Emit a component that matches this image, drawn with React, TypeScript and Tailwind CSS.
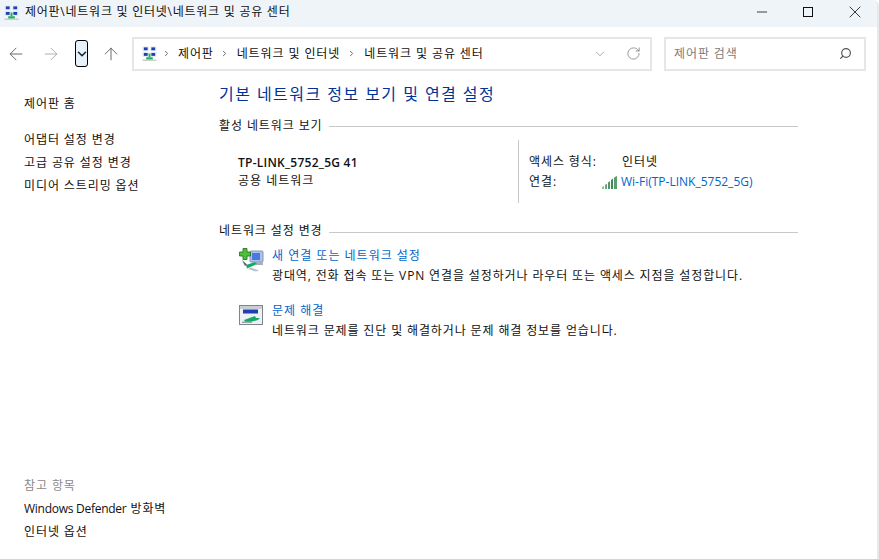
import { ArrowLeft, ArrowRight, ArrowUp, ChevronDown, ChevronRight, RotateCw, Search, Minus, X } from 'lucide-react'

function NetIcon({ size = 16 }: { size?: number }) {
  return (
    <svg width={size} height={size} viewBox="0 0 16 16" className="shrink-0">
      <rect x="0.5" y="0.5" width="6.5" height="5" fill="#dfe8f2" />
      <rect x="9" y="0.5" width="6.5" height="5" fill="#dfe8f2" />
      <rect x="0.5" y="6.5" width="6.5" height="5" fill="#dfe8f2" />
      <rect x="9" y="6.5" width="6.5" height="5" fill="#dfe8f2" />
      <rect x="2" y="1.5" width="4" height="3" fill="#1d3fb0" />
      <rect x="10" y="1.5" width="4" height="3" fill="#1d3fb0" />
      <rect x="2" y="7.5" width="4" height="3" fill="#1d3fb0" />
      <rect x="10" y="7.5" width="4" height="3" fill="#1d3fb0" />
      <rect x="7" y="8" width="2" height="4" fill="#1fb25a" />
      <rect x="4.5" y="12" width="7" height="2.5" fill="#1fb25a" />
      <rect x="0.5" y="14.5" width="15" height="1.2" fill="#b7c3c0" />
    </svg>
  )
}

function SignalIcon() {
  return (
    <svg width="16" height="13" viewBox="0 0 16 13" className="shrink-0">
      <path d="M0 13v-2l2-1v3z" fill="#8fbc9c" />
      <path d="M3 13V9l2-1.5V13z" fill="#6ba67e" />
      <path d="M6 13V6.5L8 5v8z" fill="#4f9767" />
      <path d="M9 13V4l2-1.5V13z" fill="#3f8a58" />
      <path d="M12 13V1.5L15 0v13z" fill="#5a9e70" />
    </svg>
  )
}

function NewConnectionIcon() {
  return (
    <svg width="25" height="25" viewBox="0 0 25 25" className="shrink-0">
      <rect x="11" y="3" width="13" height="11" rx="1" fill="#a9c2ee" stroke="#8a97b0" />
      <rect x="13" y="5" width="8" height="7" fill="#4a78de" />
      <rect x="17" y="14" width="7" height="3" fill="#a8b0bc" />
      <path d="M4 0.5h4v3.5h3.5v4H8v3.5H4V8H0.5V4H4z" fill="#4fbf3a" stroke="#1d6d1d" strokeWidth="0.8" />
      <path d="M7 17l9-3 2 2-10 4.5z" fill="#16a866" />
      <path d="M3 12l5 4.5-2 1.5z" fill="#55606c" />
      <path d="M9 21l8 2.5 3-1-8-3z" fill="#b8c0ca" />
    </svg>
  )
}

function TroubleshootIcon() {
  return (
    <svg width="24" height="20" viewBox="0 0 24 20" className="shrink-0">
      <rect x="0.5" y="0.5" width="23" height="19" fill="#eef1f3" stroke="#7d8590" />
      <rect x="1" y="1" width="22" height="3" fill="#c8ced4" />
      <rect x="4" y="4.5" width="15" height="4" fill="#1f3fb0" />
      <path d="M5 15l11-4 1 2h4l-2 2-12 3z" fill="#16a866" />
      <rect x="3" y="16.5" width="10" height="1.5" fill="#9aa3ad" />
    </svg>
  )
}

function SideLink({ children }: { children: React.ReactNode }) {
  return <a className="block text-[12px] leading-[23px] text-[#111] tracking-[0.9px]">{children}</a>
}

function Legend({ label, lineTop }: { label: string; lineTop: string }) {
  return (
    <div className="flex items-center gap-[6px]">
      <span className="text-[12px] leading-[16px] tracking-[0.9px] text-[#111]">{label}</span>
      <div className={`flex-1 h-px bg-[#c8c8c8] ${lineTop}`} />
    </div>
  )
}

function TaskRow({ icon, title, desc, iconTop }: { icon: React.ReactNode; title: string; desc: string; iconTop: string }) {
  return (
    <div className="flex">
      <div className={`w-[34px] flex justify-center shrink-0 ${iconTop}`}>{icon}</div>
      <div className="ml-[4px]">
        <div className="text-[12px] leading-[20px] tracking-[1px] text-[#0066cc]">{title}</div>
        <div className="text-[12px] leading-[20px] tracking-[0.87px] text-[#111]">{desc}</div>
      </div>
    </div>
  )
}

export default function App() {
  return (
    <div
      className="w-[879px] h-[559px] flex flex-col bg-white overflow-hidden border-r-2 border-[#e8e8e8] rounded-tr-[6px]"
      style={{ fontFamily: '"Open Sans", "Noto Sans CJK KR", sans-serif' }}
    >
      <header className="h-[27px] shrink-0 bg-[#eff4f9] flex items-center pl-[4px] pb-[3px]">
        <NetIcon size={15} />
        <span className="ml-[6px] text-[12px] tracking-[0.75px] text-[#111]">제어판\네트워크 및 인터넷\네트워크 및 공유 센터</span>
        <div className="ml-auto flex items-center text-[#111]">
          <div className="w-[44px] flex justify-center"><Minus size={16} strokeWidth={1.2} /></div>
          <div className="w-[47px] flex justify-center"><div className="w-[10px] h-[10px] border border-[#111]" /></div>
          <div className="w-[46px] flex justify-center pl-[1px]"><X size={20} strokeWidth={1} /></div>
        </div>
      </header>

      <div className="h-[53px] shrink-0 flex items-center">
        <div className="w-[132px] flex items-center shrink-0">
          <div className="w-[32px] flex justify-center text-[#5f5f5f]"><ArrowLeft size={20} strokeWidth={1.1} /></div>
          <div className="w-[38px] flex justify-center text-[#a8a8a8]"><ArrowRight size={20} strokeWidth={1.1} /></div>
          <div className="ml-[5px] w-[13px] h-[27px] rounded-[3px] border border-black bg-[#e5f1fb] flex items-center justify-center">
            <ChevronDown size={14} strokeWidth={2.6} className="shrink-0 text-[#222]" />
          </div>
          <div className="w-[44px] pl-[1px] flex justify-center text-[#5f5f5f]"><ArrowUp size={20} strokeWidth={1.1} /></div>
        </div>
        <div className="w-[520px] h-[34px] border-2 border-[#e6e6e6] flex items-center pl-[8px] shrink-0">
          <NetIcon size={15} />
          <ChevronRight size={9} strokeWidth={2.6} className="ml-[5px] text-[#666]" />
          <span className="ml-[7px] text-[12px] tracking-[0.85px] text-[#111]">제어판</span>
          <ChevronRight size={9} strokeWidth={2.6} className="ml-[6px] text-[#666]" />
          <span className="ml-[8px] text-[12px] tracking-[0.9px] text-[#111]">네트워크 및 인터넷</span>
          <ChevronRight size={9} strokeWidth={2.6} className="ml-[7px] text-[#666]" />
          <span className="ml-[8px] text-[12px] tracking-[0.9px] text-[#111]">네트워크 및 공유 센터</span>
          <div className="ml-auto flex items-center text-[#777]">
            <ChevronDown size={14} strokeWidth={1.1} />
            <RotateCw size={15} strokeWidth={1.2} className="ml-[19px] mr-[9px]" />
          </div>
        </div>
        <div className="ml-[12px] w-[202px] h-[34px] border-2 border-[#e6e6e6] flex items-center pl-[8px] pr-[6px] shrink-0">
          <span className="text-[12px] tracking-[0.9px] text-[#7a7a7a]">제어판 검색</span>
          <Search size={13} strokeWidth={2.2} className="ml-auto mr-[6px] text-[#555] -scale-x-100" />
        </div>
      </div>

      <div className="flex-1 flex min-h-0">
        <aside className="w-[219px] shrink-0 pl-[24px] flex flex-col pt-[12px] pb-[16px]">
          <SideLink>제어판 홈</SideLink>
          <div className="mt-[13px]">
            <SideLink>어댑터 설정 변경</SideLink>
            <SideLink>고급 공유 설정 변경</SideLink>
            <SideLink>미디어 스트리밍 옵션</SideLink>
          </div>
          <div className="mt-auto">
            <div className="text-[12px] leading-[23px] tracking-[0.9px] text-[#8a8a8a]">참고 항목</div>
            <SideLink><span className="tracking-[-0.27px]">Windows Defender</span> 방화벽</SideLink>
            <SideLink>인터넷 옵션</SideLink>
          </div>
        </aside>

        <main className="w-[579px] shrink-0 pt-[2px]">
          <h1 className="text-[16px] leading-[24px] tracking-[1.45px] text-[#003399]">기본 네트워크 정보 보기 및 연결 설정</h1>
          <div className="mt-[12px]"><Legend label="활성 네트워크 보기" lineTop="mt-[1px]" /></div>
          <div className="flex h-[63px] mt-[6px]">
            <div className="w-[300px] border-r border-[#c8c8c8] pl-[19px] pt-[14px] shrink-0">
              <div className="text-[12px] leading-[18px] font-semibold tracking-[0.25px] text-[#111]">TP-LINK_5752_5G 41</div>
              <div className="text-[12px] leading-[18px] tracking-[1px] text-[#111]">공용 네트워크</div>
            </div>
            <div className="pl-[10px] pt-[12px] text-[12px] leading-[20px] text-[#111]">
              <div className="flex tracking-[0.9px]">
                <span className="w-[93px]">액세스 형식:</span>
                <span>인터넷</span>
              </div>
              <div className="flex items-center">
                <span className="w-[73px] tracking-[0.9px]">연결:</span>
                <SignalIcon />
                <span className="ml-[3px] text-[#0066cc]">Wi-Fi(TP-LINK_5752_5G)</span>
              </div>
            </div>
          </div>
          <div className="mt-[20px]"><Legend label="네트워크 설정 변경" lineTop="mt-[3px]" /></div>
          <div className="mt-[7px] pl-[15px] flex flex-col gap-[15px]">
            <TaskRow
              iconTop="pt-[2px]"
              icon={<NewConnectionIcon />}
              title="새 연결 또는 네트워크 설정"
              desc="광대역, 전화 접속 또는 VPN 연결을 설정하거나 라우터 또는 액세스 지점을 설정합니다."
            />
            <TaskRow
              iconTop="pt-[4px]"
              icon={<TroubleshootIcon />}
              title="문제 해결"
              desc="네트워크 문제를 진단 및 해결하거나 문제 해결 정보를 얻습니다."
            />
          </div>
        </main>
      </div>
    </div>
  )
}
